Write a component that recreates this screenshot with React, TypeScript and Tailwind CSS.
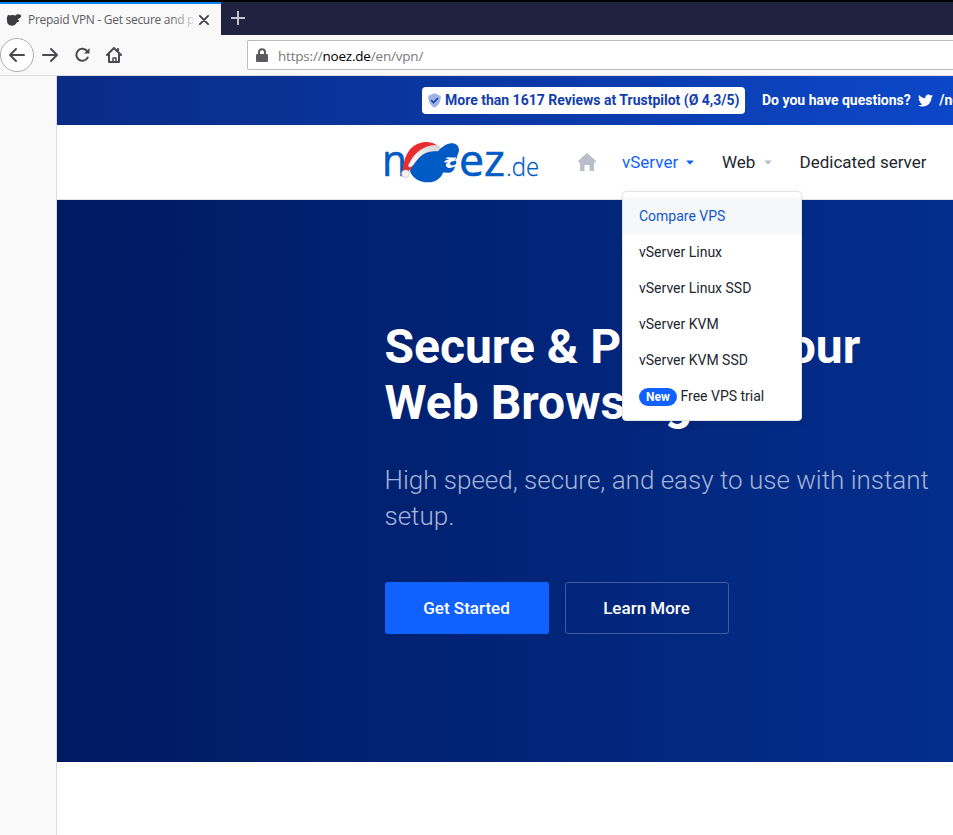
import React from "react";

const Caret = ({ color }: { color: string }) => (
  <svg className="shrink-0" width="8" height="5" viewBox="0 0 8 5" fill={color}>
    <path d="M.7.5h6.6q.5 0 .2.4L4.4 4.2q-.4.4-.8 0L.5.9Q.2.5.7.5Z" />
  </svg>
);

const Bear = () => (
  <svg width="16" height="14" viewBox="0 0 16 14" fill="#3d3d40" className="ml-[6px] shrink-0">
    <path d="M1.4 3.2C1.7 1.7 3.6 1.5 4.6 2.6c1.6-.8 3.4-.6 5 0 .6-1.4 3-1.9 4.9-.8 1 .7.9 2.2-.2 2.8-.6 1.4-2.4 1.2-2.6 2 .3.6 1.2.6 1.5 1.1-.3 1.2-1.4 1.4-2.4 1.5-.8 2.2-2.7 3.6-5 3.5-2.900-.2-5-2.100-4.700-5.200-.5-1.100-.3-3 .3-4.300Z" />
  </svg>
);

const Browser = () => (
  <header className="shrink-0 font-['Open_Sans','Noto_Sans',sans-serif]">
    <div className="h-[35px] flex bg-[#202340] border-t-2 border-black">
      <div className="w-[221px] h-[33px] bg-[#f9f9fa] border-t-2 border-[#0a84ff] flex items-center shrink-0">
        <Bear />
        <div className="relative ml-[6px] w-[165px] overflow-hidden whitespace-nowrap text-[12px] leading-[18px] text-[#5c5c60]">
          <span className="inline-block tracking-[-0.29px]">Prepaid VPN - Get secure and p</span>
          <span className="absolute right-0 top-0 w-6 h-full bg-linear-to-r from-transparent to-[#f9f9fa]/80" />
        </div>
        <svg className="ml-[6px]" width="10" height="10" viewBox="0 0 10 10" stroke="#3c3c40" strokeWidth="1.7" strokeLinecap="round">
          <path d="m.9.900 8.200 8.200M9.100.900.9 9.100" />
        </svg>
      </div>
      <svg className="ml-[10px] mt-[9px]" width="14" height="14" viewBox="0 0 14 14" stroke="#c0c1cb" strokeWidth="2">
        <path d="M7 0v14M0 7h14" />
      </svg>
    </div>
    <div className="h-[41px] bg-[#f9f9fa] border-b border-[#dcdcde] flex">
      <div className="w-[34px] h-[34px] mt-[3px] rounded-full border border-[#adadb0] bg-white flex items-center justify-center shrink-0">
        <svg width="18" height="16" viewBox="0 0 18 16" fill="none" stroke="#4b4b4f" strokeWidth="2" strokeLinecap="round" strokeLinejoin="round">
          <path d="M16 8H2M8 2 2 8l6 6" />
        </svg>
      </div>
      <svg className="ml-[7px] mt-[12px]" width="18" height="16" viewBox="0 0 18 16" fill="none" stroke="#4b4b4f" strokeWidth="2" strokeLinecap="round" strokeLinejoin="round">
        <path d="M2 8h14M10 2l6 6-6 6" />
      </svg>
      <svg className="ml-[15px] mt-[12px]" width="17" height="16" viewBox="0 0 17 16" fill="none" stroke="#4b4b4f" strokeWidth="2" strokeLinecap="round">
        <path d="M13.300 4.400A6 6 0 1 0 13.700 10.500" />
        <path d="M15.500 1v5.500H10Z" fill="#4b4b4f" stroke="none" />
      </svg>
      <svg className="ml-[15px] mt-[12px]" width="16" height="16" viewBox="0 0 16 16" fill="none" stroke="#4b4b4f" strokeWidth="2" strokeLinecap="round" strokeLinejoin="round">
        <path d="m1 8 7-7 7 7M3 7.500V15h10V7.500M12 2v2" />
        <path d="M7 15v-4h3v4" strokeWidth="1.500" />
      </svg>
      <div className="ml-[125px] mt-[5px] h-[30px] flex-1 bg-white border border-r-0 border-[#bcbcbe] rounded-l-[2px] flex items-center">
        <svg className="ml-[8px]" width="12" height="14" viewBox="0 0 12 14" fill="#5b5b5e">
          <path fillRule="evenodd" d="M2 6V4.200a4 4 0 0 1 8 0V6h.700q1.300 0 1.300 1.300v5.400Q12 14 10.700 14H1.300Q0 14 0 12.700V7.300Q0 6 1.300 6Zm2 0h4V4.200a2 2 0 0 0-4 0Z" />
        </svg>
        <span className="ml-[10px] mt-[2px] text-[13.500px] leading-5 text-[#78787b] whitespace-nowrap tracking-[-0.2px]">
          https://<span className="text-black">noez.de</span>/en/vpn/
        </span>
      </div>
    </div>
  </header>
);

const Logo = () => (
  <svg width="156" height="44" viewBox="0 0 156 44" className="shrink-0 overflow-visible" fontFamily="'Open Sans', 'Noto Sans', sans-serif" fill="#005bc4">
    <defs>
      <linearGradient id="brim" x1="0" y1="1" x2="1" y2="0">
        <stop stopColor="#fff" />
        <stop offset="1" stopColor="#d8d3d3" />
      </linearGradient>
    </defs>
    <text x="-3" y="35.500" fontSize="43" fontWeight="500" stroke="#005bc4" strokeWidth=".6" textLength="25" lengthAdjust="spacingAndGlyphs">n</text>
    <g transform="translate(0 1.500) scale(1 .95)">
      <path d="M26 25C34 11 44 7 54 8C57 7 59 4 62 3C68 0 74 3 74 9c0 3-2 5-2 8l-2 3c2 1 2 4-.5 4.500L65 26l5 .5c-1 4-3 6-6 6.500l-6-.5C56 39 50 43 43 43c-9 0-16-5-18-12Z" />
      <path d="M71.500 16.500C67 18 64 15 60.500 17.500L64.500 19.500C61 19 59 20 59.500 22l4 0c-3 1-3 3-2 4.500 2 2 5 1.500 8-.2-2-.8-4-1-4.500-2.800 0-2 2-3 4.500-3Z" fill="#fff" />
      <path d="M18 32C18 19 23 4 37 1c6-1 12 0 16 4C41 9 32 17 26 29l-5 4Z" fill="#e82c30" />
      <path d="M25 22C30 11 40 4 51 4c5 0 5 3 2 6-12-1-18 4-25 15-4 4-6 1-3-3Z" fill="url(#brim)" stroke="#dedbdd" strokeWidth=".5" />
      <circle cx="20.500" cy="34" r="3.900" fill="#f5f2f2" stroke="#c9c8ca" strokeWidth=".8" />
    </g>
    <text x="74" y="35.500" fontSize="43" fontWeight="500" stroke="#005bc4" strokeWidth=".6" textLength="46" lengthAdjust="spacingAndGlyphs">ez</text>
    <text x="121" y="35.500" fontSize="25" fontWeight="300" stroke="#005bc4" strokeWidth=".3" textLength="33" lengthAdjust="spacingAndGlyphs">.de</text>
  </svg>
);

const menu = ["Compare VPS", "vServer Linux", "vServer Linux SSD", "vServer KVM", "vServer KVM SSD"];

const Dropdown = () => (
  <div className="absolute z-10 left-0 top-[66px] w-[180px] h-[230px] rounded-[4px] border border-[#e2e4e8] bg-white shadow-[0_2px_8px_rgba(0,0,0,0.08)] pt-[6px] text-[14px] text-[#22262e] font-normal">
    {menu.map((item, i) => (
      <div key={item} className={"h-9 px-4 flex items-center whitespace-nowrap " + (i === 0 ? "bg-[#f5f7f9] text-[#1257c8]" : "")}>
        {item}
      </div>
    ))}
    <div className="h-9 px-4 flex items-center whitespace-nowrap">
      <span className="h-[18px] w-[38px] mt-px mr-[3.500px] rounded-full bg-[#1161ff] text-white text-[12px] font-bold flex items-center justify-center">New</span>
      Free VPS trial
    </div>
  </div>
);

export default function App() {
  return (
    <div className="w-[953px] h-[835px] overflow-hidden flex flex-col bg-white font-[Roboto,sans-serif]">
      <Browser />
      <div className="flex-1 flex min-h-0">
        <aside className="w-[57px] bg-[#f9f9fa] border-r border-[#dcdcde] shrink-0" />
        <main className="w-[896px] overflow-hidden flex flex-col">
          <div className="h-[49px] shrink-0 bg-linear-to-r from-[#092b85] to-[#0c47c8] flex items-center whitespace-nowrap text-[14px] font-bold text-white">
            <div className="ml-[365px] w-[323px] h-[27px] shrink-0 rounded-[4px] bg-white text-[#123ead] flex items-center pl-[6px]">
              <svg width="13" height="15" viewBox="0 0 13 15" className="shrink-0 mr-[4px]">
                <path d="M6.500.300 12.700 2.700c.300 5.300-1.600 9.600-6.200 12C1.900 12.300 0 8 .3 2.700Z" fill="#9db3e2" />
                <path d="m3.200 7.200 2.300 2.300 4.500-4.300" fill="none" stroke="#1744ad" strokeWidth="1.700" />
              </svg>
              <span>More than 1617 Reviews at Trustpilot (Ø 4,3/5)</span>
            </div>
            <span className="ml-[17px]">Do you have questions?</span>
            <svg className="ml-[7px] shrink-0" width="15" height="15" viewBox="0 0 512 512" fill="white">
              <path d="M459.370 151.716c.325 4.548.325 9.097.325 13.645 0 138.720-105.583 298.558-298.558 298.558-59.452 0-114.680-17.219-161.137-47.106 8.447.974 16.568 1.299 25.340 1.299 49.055 0 94.213-16.568 130.274-44.832-46.132-.975-84.792-31.188-98.112-72.772 6.498.974 12.995 1.624 19.818 1.624 9.421 0 18.843-1.300 27.614-3.573-48.081-9.747-84.143-51.980-84.143-102.985v-1.299c13.969 7.797 30.214 12.670 47.431 13.319-28.264-18.843-46.781-51.005-46.781-87.391 0-19.492 5.197-37.360 14.294-52.954 51.655 63.675 129.300 105.258 216.365 109.807-1.624-7.797-2.599-15.918-2.599-24.040 0-57.828 46.782-104.934 104.934-104.934 30.213 0 57.502 12.670 76.670 33.137 23.715-4.548 46.456-13.320 66.599-25.340-7.798 24.366-24.366 44.833-46.132 57.827 21.117-2.273 41.584-8.122 60.426-16.243-14.292 20.791-32.161 39.308-52.628 54.253z" />
            </svg>
            <span className="ml-[6.500px]">/noezde</span>
          </div>
          <nav className="h-[75px] shrink-0 border-b border-[#e2e4e8] flex items-center text-[17px] text-[#22262e] whitespace-nowrap">
            <div className="ml-[328px]"><Logo /></div>
            <svg className="ml-[37px] shrink-0" width="18" height="18" viewBox="0 0 18 18" fill="#b9bec9">
              <path d="M8.200.400Q9-.300 9.800.400L18 8l-.7 1.500H16V18h-4.500v-6h-5v6H2V9.500H.7L0 8Z" />
            </svg>
            <div className="relative h-full ml-[26px] w-[100px] shrink-0 flex items-center text-[#1161ff]">
              <span className="w-[64px] pt-[2px]">vServer</span><Caret color="#1161ff" />
              <Dropdown />
            </div>
            <span className="w-[42px] pt-[2px] shrink-0">Web</span><Caret color="#b9bec9" />
            <span className="ml-[27.500px] pt-[2px]">Dedicated server</span>
          </nav>
          <section className="h-[562px] shrink-0 bg-linear-to-r from-[#001a62] to-[#042e8d] pl-[328px] pt-[119px] text-white">
            <h1 className="-ml-[0.500px] text-[48px] leading-[56px] font-bold whitespace-nowrap">Secure &amp; Protect Your<br />Web Browsing</h1>
            <p className="-ml-[0.500px] mt-[31px] text-[26px] leading-[36px] font-light text-[#a5b4d7] whitespace-nowrap">High speed, secure, and easy to use with instant<br />setup.</p>
            <div className="mt-[48px] flex gap-4 text-[17px] font-medium">
              <div className="w-[164px] h-[52px] pt-[2px] pr-px rounded-[3px] bg-[#1161ff] flex items-center justify-center">Get Started</div>
              <div className="w-[164px] h-[52px] pt-[2px] pr-px rounded-[3px] border border-[#425b9d] flex items-center justify-center">Learn More</div>
            </div>
          </section>
        </main>
      </div>
    </div>
  );
}
